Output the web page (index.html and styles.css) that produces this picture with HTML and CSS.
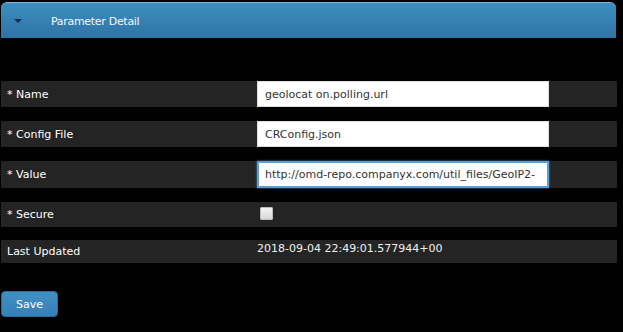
FILE: index.html
```html
<!DOCTYPE html>
<html>
<head>
<meta charset="utf-8">
<link rel="stylesheet" href="styles.css">
</head>
<body>
<div class="page">
  <div class="panel-head">
    <span class="caret"></span>
    <span class="panel-title">Parameter Detail</span>
  </div>
  <div class="rows">
    <div class="row">
      <div class="label">* Name</div>
      <div class="field"><input class="input" type="text" value="geolocat on.polling.url"></div>
    </div>
    <div class="row">
      <div class="label">* Config File</div>
      <div class="field"><input class="input" type="text" value="CRConfig.json"></div>
    </div>
    <div class="row row-value">
      <div class="label">* Value</div>
      <div class="field"><input class="input input-focus" type="text" value="http://omd-repo.companyx.com/util_files/GeoIP2-"></div>
    </div>
    <div class="row row-secure">
      <div class="label">* Secure</div>
      <div class="field"><span class="checkbox"></span></div>
    </div>
    <div class="row row-updated">
      <div class="label label-low">Last Updated</div>
      <div class="field field-text">2018-09-04 22:49:01.577944+00</div>
    </div>
  </div>
  <button class="btn-save">Save</button>
</div>
</body>
</html>
```
FILE: styles.css
```css
html, body {
  margin: 0;
  padding: 0;
  background: #000;
}
body {
  font-family: "DejaVu Sans", Verdana, sans-serif;
  font-size: 11px;
  color: #fff;
  width: 623px;
  height: 332px;
  overflow: hidden;
}
.page {
  padding: 2px 0 0 1px;
}
.panel-head {
  width: 615px;
  height: 36px;
  box-sizing: border-box;
  border-radius: 6px 6px 0 0;
  border-top: 1px solid #7db8dc;
  background: linear-gradient(#3d8fc0, #2f72a6);
  display: flex;
  align-items: center;
}
.caret {
  width: 0;
  height: 0;
  margin-left: 13px;
  margin-top: 1px;
  border-left: 4px solid transparent;
  border-right: 4px solid transparent;
  border-top: 4px solid #142f47;
}
.panel-title {
  margin-left: 29px;
  margin-top: 1px;
  color: #f2f8fc;
  letter-spacing: -0.3px;
}
.rows {
  margin-top: 43px;
  display: flex;
  flex-direction: column;
  gap: 14px;
}
.row {
  width: 616px;
  height: 26px;
  background: #242424;
  display: flex;
}
.row-value { height: 27px; }
.row-secure { height: 25px; }
.row-updated { height: 23px; margin-top: -1px; }
.label {
  width: 256px;
  padding-left: 6px;
  box-sizing: border-box;
  display: flex;
  align-items: center;
  color: #fff;
}
.label-low {
  align-items: flex-start;
  padding-top: 5px;
}
.field {
  flex: 1;
  display: flex;
  align-items: stretch;
}
.input {
  width: 292px;
  box-sizing: border-box;
  margin: 0;
  border: 1px solid #ddd;
  background: #fff;
  padding: 0 0 0 7px;
  font-family: "DejaVu Sans", Verdana, sans-serif;
  font-size: 11px;
  color: #333;
  outline: none;
}
.input-focus {
  border: 2px solid #5b9fd6;
  padding-left: 6px;
  box-shadow: 0 0 2px #4a90d0;
}
.checkbox {
  width: 11px;
  height: 11px;
  margin: 5px 0 0 3px;
  border: 1px solid #bbb;
  border-radius: 1px;
  background: linear-gradient(#f4f4f4, #d8d8d8);
}
.field-text {
  align-items: flex-start;
  padding-top: 2px;
  color: #f0f0f0;
}
.btn-save {
  margin-top: 28px;
  width: 57px;
  height: 26px;
  border: 1px solid #2c6a98;
  border-radius: 4px;
  background: linear-gradient(#4190c4, #3680b8);
  color: #fff;
  font-family: "DejaVu Sans", Verdana, sans-serif;
  font-size: 11px;
  padding: 0;
}
```
